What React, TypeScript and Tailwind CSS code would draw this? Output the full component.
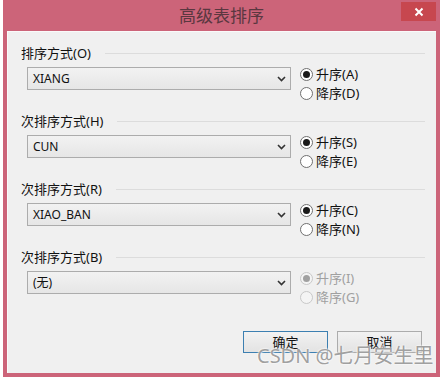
import React from "react";

const FONT = { fontFamily: '"Noto Sans", "Noto Sans CJK SC", sans-serif' };

const GROUPS = [
  { label: "排序方式(O)", value: "XIANG", asc: "升序(A)", desc: "降序(D)", disabled: false },
  { label: "次排序方式(H)", value: "CUN", asc: "升序(S)", desc: "降序(E)", disabled: false },
  { label: "次排序方式(R)", value: "XIAO_BAN", asc: "升序(C)", desc: "降序(N)", disabled: false },
  { label: "次排序方式(B)", value: "(无)", asc: "升序(I)", desc: "降序(G)", disabled: true },
];

function Radio({ checked, disabled, text }: { checked: boolean; disabled: boolean; text: string }) {
  return (
    <div className="flex items-center h-[19px]">
      <span
        className={`w-[13px] h-[13px] rounded-full border flex items-center justify-center ${
          disabled ? "border-[#c8c8c8] bg-[#f4f4f4]" : "border-[#707070] bg-white"
        }`}
      >
        {checked && (
          <span className={`w-[7px] h-[7px] rounded-full ${disabled ? "bg-[#a0a0a0]" : "bg-[#1a1a1a]"}`} />
        )}
      </span>
      <span className={`ml-[3px] text-[13px] leading-none ${disabled ? "text-[#a0a0a0]" : "text-[#111]"}`}>
        {text}
      </span>
    </div>
  );
}

function SortGroup({ g }: { g: (typeof GROUPS)[number] }) {
  return (
    <div className="h-[68px] flex flex-col">
      <div className="flex items-center h-[16px] pl-[13px] pr-[11px]">
        <span className="text-[13px] leading-none text-[#111] whitespace-nowrap">{g.label}</span>
        <span className="flex-1 h-px bg-[#dcdcdc] ml-[14px]" />
      </div>
      <div className="flex mt-[6px] pl-[19px]">
        <div className="w-[264px] h-[23px] border border-[#acacac] bg-gradient-to-b from-[#f2f2f2] to-[#e6e6e6] flex items-center pl-[5px] pr-[4px]">
          <span className="flex-1 text-[12px] leading-none text-[#111]">{g.value}</span>
          <svg width="9" height="6" viewBox="0 0 9 6">
            <path d="M1 1 L4.5 4.5 L8 1" fill="none" stroke="#333" strokeWidth="1.6" />
          </svg>
        </div>
        <div className="flex flex-col ml-[9px] -mt-[2px]">
          <Radio checked={true} disabled={g.disabled} text={g.asc} />
          <Radio checked={false} disabled={g.disabled} text={g.desc} />
        </div>
      </div>
    </div>
  );
}

export default function App() {
  return (
    <div className="w-[446px] h-[380px] bg-white pl-[3px] relative" style={FONT}>
      <div className="w-[437px] h-[377px] bg-[#cc6479] flex flex-col px-[4px] pb-[4px]">
        {/* Title bar */}
        <div className="h-[31px] relative flex items-center justify-center shrink-0">
          <span className="text-[17px] text-[#5a3740]">高级表排序</span>
          <div className="absolute right-[0px] top-[2px] w-[35px] h-[19px] bg-[#c7474f] flex items-center justify-center">
            <svg width="10" height="10" viewBox="0 0 10 10">
              <path d="M1.5 1.5 L8.5 8.5 M8.5 1.5 L1.5 8.5" stroke="#fff" strokeWidth="2" />
            </svg>
          </div>
        </div>

        {/* Client area */}
        <div className="flex-1 bg-[#f0f0f0] border-l border-t border-[#fafafa] flex flex-col pt-[13px]">
          {GROUPS.map((g) => (
            <SortGroup key={g.label} g={g} />
          ))}
          <div className="flex justify-end gap-[9px] mt-[14px] pr-[14px]">
            <button className="w-[85px] h-[22px] border border-[#3c7fb1] bg-gradient-to-b from-[#f2f2f2] to-[#e3e3e3] text-[13px] leading-none text-[#111]">
              确定
            </button>
            <button className="w-[85px] h-[22px] border border-[#acacac] bg-gradient-to-b from-[#f2f2f2] to-[#e3e3e3] text-[13px] leading-none text-[#111]">
              取消
            </button>
          </div>
        </div>
      </div>

      {/* watermark */}
      <span
        className="absolute left-[257px] top-[346px] text-[20px] leading-none text-[#a0a0a0] whitespace-nowrap"
        style={{ textShadow: "0 0 2px #fff, 0 0 2px #fff" }}
      >
        CSDN @七月安生里
      </span>
    </div>
  );
}
